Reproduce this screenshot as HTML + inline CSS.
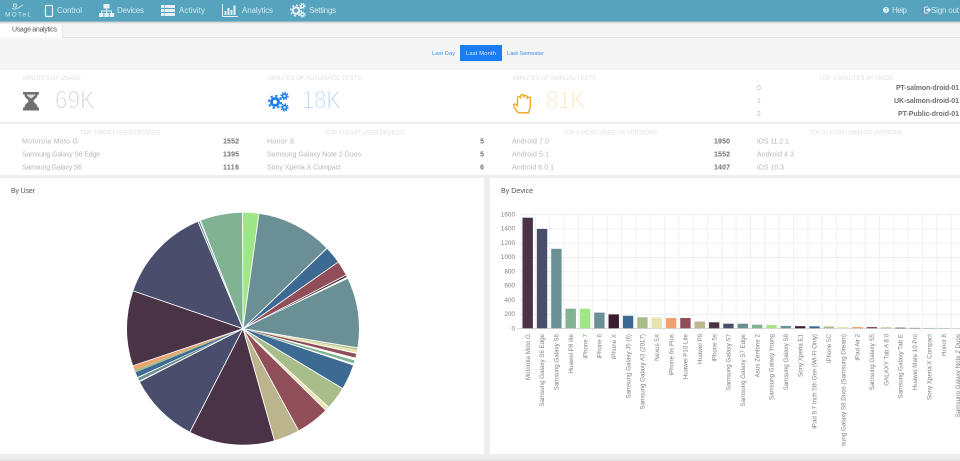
<!DOCTYPE html>
<html lang="en"><head><meta charset="utf-8"><title>Usage analytics</title>
<style>
html,body{margin:0;padding:0;width:960px;height:461px;overflow:hidden;background:#eee}
svg{display:block;filter:blur(.3px);font-family:"Liberation Sans",sans-serif}
.n{fill:#d5e8ef;font-size:8px}
.h{fill:#e0e0e0;font-size:6px}
.t{fill:#b8b8b8;font-size:7px}
.v{fill:#707070;font-size:7px;font-weight:bold;text-anchor:end}
.big{font-size:25px;stroke:#fff;stroke-width:.8}
.l{fill:#808080;font-size:6.2px;text-anchor:end}
.y{fill:#808080;font-size:6.4px;text-anchor:end}
</style></head><body>
<svg width="960" height="461" viewBox="0 0 960 461" xmlns="http://www.w3.org/2000/svg">
<defs>
<linearGradient id="sh" x1="0" y1="0" x2="0" y2="1"><stop offset="0" stop-color="#c4c4c4"/><stop offset="1" stop-color="#f5f5f5"/></linearGradient>
<pattern id="grid" x="520.7" y="214.3" width="14.34" height="14.25" patternUnits="userSpaceOnUse"><path d="M0 0H14.34M0 0V14.25" stroke="#ebebeb" stroke-width="1.4" fill="none"/></pattern>
<clipPath id="lc"><rect x="490" y="330" width="470" height="116"/></clipPath>
</defs>

<!-- page -->
<rect width="960" height="461" fill="#eee"/>
<rect y="22" width="960" height="48" fill="#f5f5f5"/>
<rect y="37" width="960" height="1" fill="#e4e4e4"/>
<rect y="22" width="62" height="16" fill="#fff"/>
<rect x="62" y="22" width="1" height="16" fill="#e4e4e4"/>
<rect y="70" width="960" height="52" fill="#fff"/>
<rect y="124" width="960" height="51" fill="#fff"/>
<rect y="178" width="484" height="276" fill="#fff"/>
<rect x="490" y="178" width="470" height="276" fill="#fff"/>
<rect y="459" width="960" height="2" fill="#e6e6e6"/>

<!-- nav -->
<rect width="960" height="21.5" fill="#56a3bd"/>
<rect y="21.5" width="960" height="2.5" fill="url(#sh)"/>
<g fill="none" stroke="#d5e8ef" stroke-width=".9">
<circle cx="15" cy="5.5" r="1.6"/>
<path d="M12 8c2 2 4 1 6 0s3-2 5-3"/>
</g>
<text x="5" y="16.5" fill="#d5e8ef" font-size="6.5" textLength="26">MOTeL</text>
<rect x="45.5" y="5.5" width="7" height="11" rx="1.2" fill="none" stroke="#e6f1f5" stroke-width="1.3"/>
<text class="n" x="57" y="13" textLength="25">Control</text>
<!-- sitemap -->
<g fill="#e6f1f5"><rect x="103.5" y="4" width="6" height="4.5"/><rect x="99" y="13" width="4.5" height="4"/><rect x="104.3" y="13" width="4.5" height="4"/><rect x="109.7" y="13" width="4.5" height="4"/><path d="M106 8.5h1v2h5v2.5h-1v-1.5h-4v1.500h-1v-1.500h-4v1.500h-1v-2.500h5z"/></g>
<text class="n" x="117" y="13" textLength="27">Devices</text>
<!-- list -->
<g fill="#e6f1f5"><rect x="161" y="5" width="3.500" height="3"/><rect x="165" y="5" width="10" height="3"/><rect x="161" y="9" width="3.500" height="3"/><rect x="165" y="9" width="10" height="3"/><rect x="161" y="13" width="3.500" height="3"/><rect x="165" y="13" width="10" height="3"/></g>
<text class="n" x="179" y="13" textLength="26">Activity</text>
<!-- bars -->
<g fill="#e6f1f5"><rect x="222" y="4" width="1" height="13"/><rect x="222" y="16" width="16" height="1"/><rect x="224.500" y="11" width="2" height="4"/><rect x="227.500" y="8" width="2" height="7"/><rect x="230.500" y="10" width="2" height="5"/><rect x="233.500" y="5.500" width="2" height="9.500"/></g>
<text class="n" x="242" y="13" textLength="31">Analytics</text>
<!-- gears nav -->
<g fill="none" stroke="#e6f1f5">
<circle cx="296" cy="10.500" r="3.200" stroke-width="2.200"/><circle cx="296" cy="10.500" r="5.300" stroke-width="1.500" stroke-dasharray="2 2.160"/>
<circle cx="302.500" cy="6" r="1.500" stroke-width="1.300"/><circle cx="302.500" cy="6" r="2.700" stroke-width="1" stroke-dasharray="1.100 1.020"/>
<circle cx="302.500" cy="14.500" r="1.500" stroke-width="1.300"/><circle cx="302.500" cy="14.500" r="2.700" stroke-width="1" stroke-dasharray="1.100 1.020"/>
</g>
<text class="n" x="309" y="13" textLength="27">Settings</text>
<circle cx="886" cy="10" r="3" fill="#f0f7f9"/><text x="886" y="12" font-size="5" font-weight="bold" fill="#56a3bd" text-anchor="middle">?</text>
<text class="n" x="892" y="13" textLength="15">Help</text>
<path d="M928 7h-2.500a1 1 0 0 0-1 1v4a1 1 0 0 0 1 1h2.500" fill="none" stroke="#e6f1f5" stroke-width=".9"/><path d="M926.500 9h2v-2l2.500 3-2.500 3v-2h-2z" fill="#e6f1f5"/>
<text class="n" x="931" y="13" textLength="28">Sign out</text>

<text x="12" y="31.500" fill="#555" font-size="7" textLength="45">Usage analytics</text>

<!-- filter -->
<rect x="460" y="45" width="42" height="16" fill="#1a7cf0"/>
<text x="432" y="55" fill="#3f8fe8" font-size="5.800" textLength="23">Last Day</text>
<text x="466" y="55" fill="#e6f1ff" font-size="5.800" textLength="30">Last Month</text>
<text x="507" y="55" fill="#3f8fe8" font-size="5.800" textLength="37">Last Semester</text>

<!-- stats -->
<text class="h" x="23" y="80" textLength="58">MINUTES OF USAGE</text>
<text class="h" x="268" y="80" textLength="93">MINUTES OF AUTOMATIC TESTS</text>
<text class="h" x="513" y="80" textLength="83">MINUTES OF MANUAL TESTS</text>
<text class="h" x="819" y="80" textLength="74">TOP 3 MINUTES BY NODE</text>

<path d="M23 92h16v2.500h-1.500c0 3.500-3.500 4.500-4 6.500.5 2 4 3 4 6.500h1.500v3H23v-3h1.500c0-3.500 3.500-4.500 4-6.500-.5-2-4-3-4-6.500H23z" fill="#707070"/>
<path d="M26.500 94.500h9c-.5 1.500-2.500 2.500-4.500 4-2-1.500-4-2.500-4.500-4z" fill="#fff" opacity=".75"/>
<text class="big" x="55" y="108.500" fill="#d9d9d9" textLength="40" lengthAdjust="spacingAndGlyphs">69K</text>

<g fill="none" stroke="#1a7cf0">
<circle cx="275" cy="102" r="3.600" stroke-width="2.800"/><circle cx="275" cy="102" r="6.200" stroke-width="1.800" stroke-dasharray="2.400 2.470"/>
<circle cx="284.500" cy="96" r="2" stroke-width="1.700"/><circle cx="284.500" cy="96" r="3.500" stroke-width="1.300" stroke-dasharray="1.500 1.250"/>
<circle cx="284.500" cy="107.500" r="2" stroke-width="1.700"/><circle cx="284.500" cy="107.500" r="3.500" stroke-width="1.300" stroke-dasharray="1.500 1.250"/>
</g>
<text class="big" x="302" y="108.500" fill="#c2dbf4" textLength="39" lengthAdjust="spacingAndGlyphs">18K</text>

<path d="M518 112.500c-1.500-2-4.500-5-4.500-7 0-1.500 1.500-2 3-.5l1 1v-8c0-1.800 3.200-1.800 3.200 0v-2c0-1.800 3.200-1.800 3.200 0v1c0-1.800 3.200-1.800 3.200 0v1.500c0-1.800 3.200-1.800 3.200 0v7c0 3-1 5-2 7.500z" fill="none" stroke="#f5a623" stroke-width="1.400" stroke-linejoin="round"/>
<text class="big" x="546" y="108.500" fill="#fae6c4" textLength="39" lengthAdjust="spacingAndGlyphs">81K</text>

<text x="757" y="90" fill="#bbb" font-size="7">0</text><text x="757" y="103" fill="#bbb" font-size="7">1</text><text x="757" y="116" fill="#bbb" font-size="7">2</text>
<text class="v" x="959" y="90" textLength="63">PT-salmon-droid-01</text>
<text class="v" x="959" y="103" textLength="65">UK-salmon-droid-01</text>
<text class="v" x="959" y="116" textLength="61">PT-Public-droid-01</text>

<!-- top 3 -->
<text class="h" x="80" y="134.500" textLength="80">TOP 3 MOST USED DEVICES</text>
<text class="h" x="325" y="134.500" textLength="80">TOP 3 LEAST USED DEVICES</text>
<text class="h" x="563" y="134.500" textLength="94">TOP 3 MOST USED OS VERSIONS</text>
<text class="h" x="809" y="134.500" textLength="94">TOP 3 LEAST USED OS VERSIONS</text>

<text class="t" x="22" y="143.500" textLength="56">Motorola Moto G</text>
<text class="t" x="22" y="156.500" textLength="78">Samsung Galaxy S6 Edge</text>
<text class="t" x="22" y="169.500" textLength="60">Samsung Galaxy S6</text>
<text class="v" x="239" y="143.500" textLength="16">1552</text>
<text class="v" x="239" y="156.500" textLength="16">1395</text>
<text class="v" x="239" y="169.500" textLength="16">1116</text>

<text class="t" x="267" y="143.500" textLength="27">Honor 8</text>
<text class="t" x="267" y="156.500" textLength="94">Samsung Galaxy Note 2 Duos</text>
<text class="t" x="267" y="169.500" textLength="74">Sony Xperia X Compact</text>
<text class="v" x="484" y="143.500">5</text>
<text class="v" x="484" y="156.500">5</text>
<text class="v" x="484" y="169.500">6</text>

<text class="t" x="512" y="143.500" textLength="37">Android 7.0</text>
<text class="t" x="512" y="156.500" textLength="37">Android 5.1</text>
<text class="t" x="512" y="169.500" textLength="42">Android 6.0.1</text>
<text class="v" x="730" y="143.500" textLength="16">1950</text>
<text class="v" x="730" y="156.500" textLength="16">1552</text>
<text class="v" x="730" y="169.500" textLength="16">1407</text>

<text class="t" x="757" y="143.500" textLength="32">iOS 11.2.1</text>
<text class="t" x="757" y="156.500" textLength="37">Android 4.3</text>
<text class="t" x="757" y="169.500" textLength="27">iOS 10.3</text>

<text x="11" y="193" fill="#555" font-size="7" textLength="24">By User</text>
<text x="501" y="193" fill="#555" font-size="7" textLength="32">By Device</text>

<!-- pie -->
<g transform="rotate(-90 243 328.700)" fill="none" stroke-width="116">
<circle cx="243" cy="328.700" r="58" pathLength="360" stroke="#9ee686" stroke-dasharray="7.900 360"/>
<circle cx="243" cy="328.700" r="58" pathLength="360" stroke="#6a9095" stroke-dasharray="38.100 360" stroke-dashoffset="-7.900"/>
<circle cx="243" cy="328.700" r="58" pathLength="360" stroke="#3c6a92" stroke-dasharray="8.500 360" stroke-dashoffset="-46.500"/>
<circle cx="243" cy="328.700" r="58" pathLength="360" stroke="#8f4e58" stroke-dasharray="7.500 360" stroke-dashoffset="-55"/>
<circle cx="243" cy="328.700" r="58" pathLength="360" stroke="#4a3347" stroke-dasharray="1 360" stroke-dashoffset="-62.500"/>
<circle cx="243" cy="328.700" r="58" pathLength="360" stroke="#6a9095" stroke-dasharray="35 360" stroke-dashoffset="-64.500"/>
<circle cx="243" cy="328.700" r="58" pathLength="360" stroke="#a9bd8b" stroke-dasharray="1 360" stroke-dashoffset="-99.500"/>
<circle cx="243" cy="328.700" r="58" pathLength="360" stroke="#e8e4b0" stroke-dasharray="1.500 360" stroke-dashoffset="-100.500"/>
<circle cx="243" cy="328.700" r="58" pathLength="360" stroke="#8f4e58" stroke-dasharray="1.900 360" stroke-dashoffset="-102.600"/>
<circle cx="243" cy="328.700" r="58" pathLength="360" stroke="#7fb394" stroke-dasharray="1.500 360" stroke-dashoffset="-106"/>
<circle cx="243" cy="328.700" r="58" pathLength="360" stroke="#3c6a92" stroke-dasharray="12.500 360" stroke-dashoffset="-108.500"/>
<circle cx="243" cy="328.700" r="58" pathLength="360" stroke="#a9bd8b" stroke-dasharray="11.500 360" stroke-dashoffset="-121"/>
<circle cx="243" cy="328.700" r="58" pathLength="360" stroke="#e8e4b0" stroke-dasharray="2.100 360" stroke-dashoffset="-132.500"/>
<circle cx="243" cy="328.700" r="58" pathLength="360" stroke="#8f4e58" stroke-dasharray="16.800 360" stroke-dashoffset="-134.600"/>
<circle cx="243" cy="328.700" r="58" pathLength="360" stroke="#bcb48d" stroke-dasharray="12.900 360" stroke-dashoffset="-151.400"/>
<circle cx="243" cy="328.700" r="58" pathLength="360" stroke="#4a3347" stroke-dasharray="42.900 360" stroke-dashoffset="-164.300"/>
<circle cx="243" cy="328.700" r="58" pathLength="360" stroke="#4a4e6d" stroke-dasharray="35.600 360" stroke-dashoffset="-207.200"/>
<circle cx="243" cy="328.700" r="58" pathLength="360" stroke="#6a9095" stroke-dasharray="1.500 360" stroke-dashoffset="-243.500"/>
<circle cx="243" cy="328.700" r="58" pathLength="360" stroke="#3c6a92" stroke-dasharray="2.500 360" stroke-dashoffset="-245.500"/>
<circle cx="243" cy="328.700" r="58" pathLength="360" stroke="#a9bd8b" stroke-dasharray="1.500 360" stroke-dashoffset="-248"/>
<circle cx="243" cy="328.700" r="58" pathLength="360" stroke="#f59f6e" stroke-dasharray="1.900 360" stroke-dashoffset="-249.500"/>
<circle cx="243" cy="328.700" r="58" pathLength="360" stroke="#4a3347" stroke-dasharray="37.600 360" stroke-dashoffset="-251.400"/>
<circle cx="243" cy="328.700" r="58" pathLength="360" stroke="#4a4e6d" stroke-dasharray="48.200 360" stroke-dashoffset="-289"/>
<circle cx="243" cy="328.700" r="58" pathLength="360" stroke="#6a9095" stroke-dasharray="1 360" stroke-dashoffset="-337.200"/>
<circle cx="243" cy="328.700" r="58" pathLength="360" stroke="#7fb394" stroke-dasharray="20.900 360" stroke-dashoffset="-338.800"/>
</g>
<g stroke="#fff" stroke-width=".9">
<line x1="243" y1="328.700" x2="243" y2="211" transform="rotate(7.900 243 328.700)"/>
<line x1="243" y1="328.700" x2="243" y2="211" transform="rotate(46.200 243 328.700)"/>
<line x1="243" y1="328.700" x2="243" y2="211" transform="rotate(55 243 328.700)"/>
<line x1="243" y1="328.700" x2="243" y2="211" transform="rotate(62.500 243 328.700)"/>
<line x1="243" y1="328.700" x2="243" y2="211" transform="rotate(99.500 243 328.700)"/>
<line x1="243" y1="328.700" x2="243" y2="211" transform="rotate(121 243 328.700)"/>
<line x1="243" y1="328.700" x2="243" y2="211" transform="rotate(132.500 243 328.700)"/>
<line x1="243" y1="328.700" x2="243" y2="211" transform="rotate(134.600 243 328.700)"/>
<line x1="243" y1="328.700" x2="243" y2="211" transform="rotate(151.400 243 328.700)"/>
<line x1="243" y1="328.700" x2="243" y2="211" transform="rotate(164.300 243 328.700)"/>
<line x1="243" y1="328.700" x2="243" y2="211" transform="rotate(207.200 243 328.700)"/>
<line x1="243" y1="328.700" x2="243" y2="211" transform="rotate(243 243 328.700)"/>
<line x1="243" y1="328.700" x2="243" y2="211" transform="rotate(251.400 243 328.700)"/>
<line x1="243" y1="328.700" x2="243" y2="211" transform="rotate(289 243 328.700)"/>
<line x1="243" y1="328.700" x2="243" y2="211" transform="rotate(337.200 243 328.700)"/>
<line x1="243" y1="328.700" x2="243" y2="211" transform="rotate(338.500 243 328.700)"/>
<line x1="243" y1="328.700" x2="243" y2="211" transform="rotate(359.800 243 328.700)"/>
</g>

<!-- bar chart -->
<rect x="520" y="214" width="440" height="114.300" fill="url(#grid)"/>
<line x1="520.350" y1="329.500" x2="960" y2="329.500" stroke="#e6e6e6" stroke-width="3" stroke-dasharray=".7 13.640"/>
<rect x="517" y="328" width="443" height="1" fill="#d9d9d9"/>
<g>
<text class="y" x="515" y="216.500">1600</text>
<text class="y" x="515" y="230.700">1400</text>
<text class="y" x="515" y="245">1200</text>
<text class="y" x="515" y="259.200">1000</text>
<text class="y" x="515" y="273.500">800</text>
<text class="y" x="515" y="287.700">600</text>
<text class="y" x="515" y="302">400</text>
<text class="y" x="515" y="316.200">200</text>
<text class="y" x="515" y="330.500">0</text>
</g>
<g>
<rect x="522.500" y="217.700" width="10.400" height="110.600" fill="#4a3347"/>
<rect x="536.840" y="228.900" width="10.400" height="99.400" fill="#4a4e6d"/>
<rect x="551.180" y="248.800" width="10.400" height="79.500" fill="#6a9095"/>
<rect x="565.520" y="308.700" width="10.400" height="19.600" fill="#7fb394"/>
<rect x="579.860" y="308.700" width="10.400" height="19.600" fill="#9ee686"/>
<rect x="594.200" y="312.600" width="10.400" height="15.700" fill="#6a9095"/>
<rect x="608.540" y="314.400" width="10.400" height="13.900" fill="#3a1d2e"/>
<rect x="622.880" y="315.800" width="10.400" height="12.500" fill="#3c6a92"/>
<rect x="637.220" y="317.300" width="10.400" height="11" fill="#a9bd8b"/>
<rect x="651.560" y="317.600" width="10.400" height="10.700" fill="#e8e4b0"/>
<rect x="665.900" y="318" width="10.400" height="10.300" fill="#f59f6e"/>
<rect x="680.240" y="318" width="10.400" height="10.300" fill="#8f4e58"/>
<rect x="694.580" y="321.500" width="10.400" height="6.800" fill="#bcb48d"/>
<rect x="708.920" y="322.300" width="10.400" height="6" fill="#4a3347"/>
<rect x="723.260" y="323.700" width="10.400" height="4.600" fill="#4a4e6d"/>
<rect x="737.600" y="323.700" width="10.400" height="4.600" fill="#6a9095"/>
<rect x="751.940" y="324.700" width="10.400" height="3.600" fill="#7fb394"/>
<rect x="766.280" y="325.100" width="10.400" height="3.200" fill="#9ee686"/>
<rect x="780.620" y="325.900" width="10.400" height="2.400" fill="#6a9095"/>
<rect x="794.960" y="326.200" width="10.400" height="2.100" fill="#3a1d2e"/>
<rect x="809.300" y="326.300" width="10.400" height="2" fill="#3c6a92"/>
<rect x="823.640" y="326.500" width="10.400" height="1.800" fill="#a9bd8b"/>
<rect x="837.980" y="326.900" width="10.400" height="1.400" fill="#e8e4b0"/>
<rect x="852.320" y="327" width="10.400" height="1.300" fill="#f59f6e"/>
<rect x="866.660" y="327" width="10.400" height="1.300" fill="#8f4e58"/>
<rect x="881" y="327.400" width="10.400" height=".9" fill="#bcb48d"/>
<rect x="895.340" y="327.700" width="10.400" height=".6" fill="#4a3347"/>
<rect x="909.680" y="327.900" width="10.400" height=".4" fill="#4a4e6d"/>
<rect x="924.020" y="327.950" width="10.400" height=".35" fill="#6a9095"/>
<rect x="938.360" y="327.950" width="10.400" height=".35" fill="#7fb394"/>
<rect x="952.700" y="327.950" width="7.300" height=".35" fill="#9ee686"/>
</g>
<g clip-path="url(#lc)">
<text class="l" transform="translate(529.900 334) rotate(-90)">Motorola Moto G</text>
<text class="l" transform="translate(544.240 334) rotate(-90)">Samsung Galaxy S6 Edge</text>
<text class="l" transform="translate(558.580 334) rotate(-90)">Samsung Galaxy S6</text>
<text class="l" transform="translate(572.920 334) rotate(-90)">Huawei P8 lite</text>
<text class="l" transform="translate(587.260 334) rotate(-90)">iPhone 7</text>
<text class="l" transform="translate(601.600 334) rotate(-90)">iPhone 6</text>
<text class="l" transform="translate(615.940 334) rotate(-90)">iPhone X</text>
<text class="l" transform="translate(630.280 334) rotate(-90)">Samsung Galaxy J5 (6)</text>
<text class="l" transform="translate(644.620 334) rotate(-90)">Samsung Galaxy A3 (2017)</text>
<text class="l" transform="translate(658.960 334) rotate(-90)">Nexus 5X</text>
<text class="l" transform="translate(673.300 334) rotate(-90)">iPhone 6s Plus</text>
<text class="l" transform="translate(687.640 334) rotate(-90)">Huawei P10 Lite</text>
<text class="l" transform="translate(701.980 334) rotate(-90)">Huawei P9</text>
<text class="l" transform="translate(716.320 334) rotate(-90)">iPhone 5s</text>
<text class="l" transform="translate(730.660 334) rotate(-90)">Samsung Galaxy S7</text>
<text class="l" transform="translate(745 334) rotate(-90)">Samsung Galaxy S7 Edge</text>
<text class="l" transform="translate(759.340 334) rotate(-90)">Asus Zenfone 2</text>
<text class="l" transform="translate(773.680 334) rotate(-90)">Samsung Galaxy Young</text>
<text class="l" transform="translate(788.020 334) rotate(-90)">Samsung Galaxy S8</text>
<text class="l" transform="translate(802.360 334) rotate(-90)">Sony Xperia E1</text>
<text class="l" transform="translate(816.700 334) rotate(-90)">iPad 9.7 Inch 5th Gen (Wi-Fi Only)</text>
<text class="l" transform="translate(831.040 334) rotate(-90)">iPhone 5C</text>
<text class="l" transform="translate(845.380 334) rotate(-90)">Samsung Galaxy S8 Duos (Samsung Dream)</text>
<text class="l" transform="translate(859.720 334) rotate(-90)">iPad Air 2</text>
<text class="l" transform="translate(874.060 334) rotate(-90)">Samsung Galaxy S5</text>
<text class="l" transform="translate(888.400 334) rotate(-90)">GALAXY Tab A 8.0</text>
<text class="l" transform="translate(902.740 334) rotate(-90)">Samsung Galaxy Tab E</text>
<text class="l" transform="translate(917.080 334) rotate(-90)">Huawei Mate 10 Pro</text>
<text class="l" transform="translate(931.420 334) rotate(-90)">Sony Xperia X Compact</text>
<text class="l" transform="translate(945.760 334) rotate(-90)">Honor 8</text>
<text class="l" transform="translate(960.100 334) rotate(-90)">Samsung Galaxy Note 2 Duos</text>
</g>
</svg>
</body></html>
